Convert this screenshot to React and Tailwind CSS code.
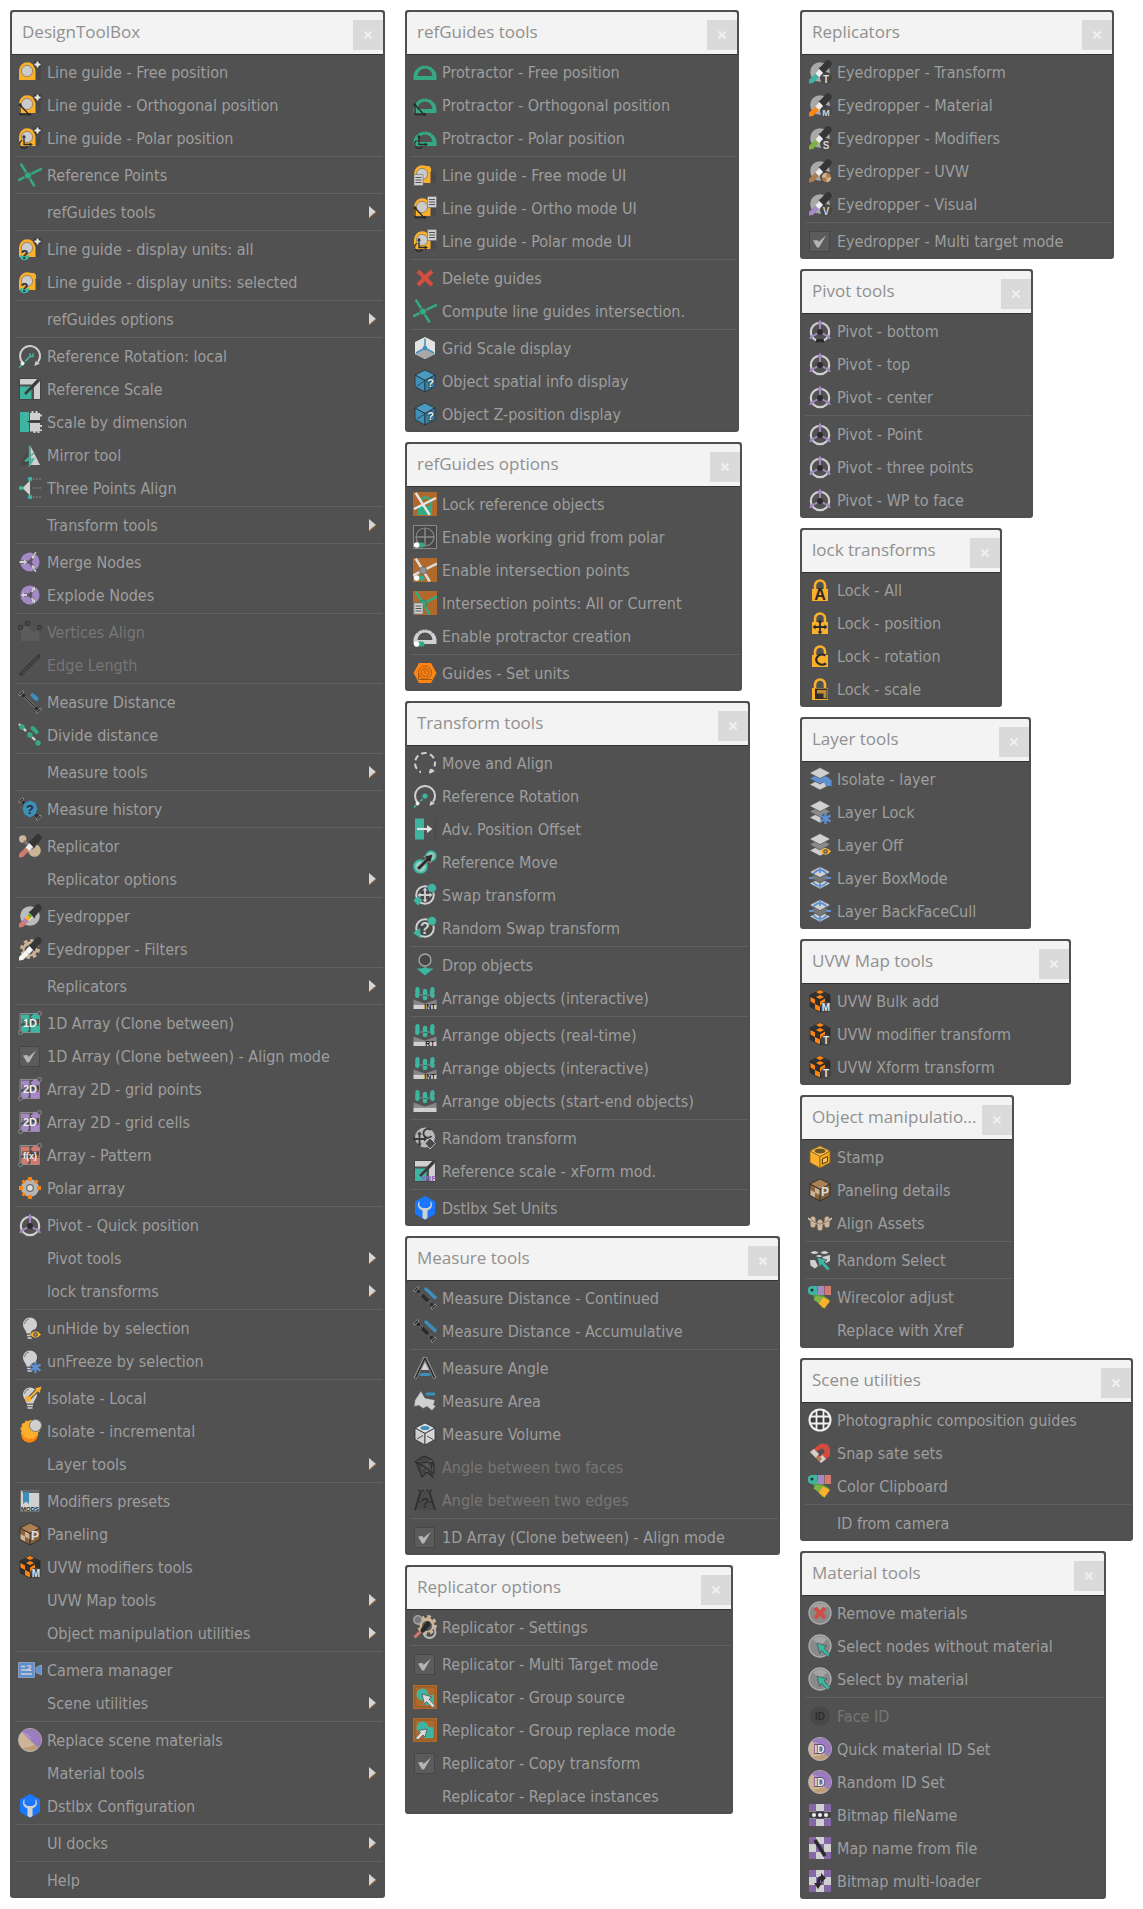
import React from "react";

const TEAL = "#3eb5a0";
const GREEN = "#35a983";
const YELLOW = "#fbb02d";
const ORANGE = "#ff8412";
const LIGHT = "#d0d0d0";
const GRAY = "#a9a9a9";
const DARK = "#2b2b2b";
const PURPLE = "#a489c4";
const BLUE = "#3c8fb8";
const SKY = "#5f91d2";
const BEIGE = "#cdb497";
const SALMON = "#d17a70";
const BROWN = "#a97d50";
const BASE = "#515151";

/* ---------- shared icon parts ---------- */

const Glyph = ({ x = 12, y = 17, size = 9, fill = LIGHT, outline = "none", children }) => (
  <text
    x={x}
    y={y}
    fontSize={size}
    fill={fill}
    stroke={outline}
    strokeWidth={outline === "none" ? 0 : 2}
    paintOrder="stroke"
    fontWeight="700"
    textAnchor="middle"
    fontFamily="Liberation Sans, sans-serif"
  >
    {children}
  </text>
);

const Tape = ({ bump }) => (
  <>
    <path d="M17 9h6v11h-6z" fill="#494949" />
    <path d="M1 20V10.500a8 8 0 0 1 16.500 0V20z" fill={YELLOW} />
    {bump && <path d="M12 3h4l2 2v4l-3 1z" fill={YELLOW} />}
    <circle cx="9" cy="11" r="5.600" fill="#cbcbcb" stroke="#8a7a55" strokeWidth="0.800" />
  </>
);

const Plus = () => (
  <>
    <circle cx="19.500" cy="4.500" r="4" fill="#3a3a3a" />
    <path d="M19.500 1.500v6M16.500 4.500h6" stroke="#ececec" strokeWidth="2" />
  </>
);

const Ortho = () => (
  <g stroke={DARK} strokeWidth="1.300" fill="none">
    <path d="M2 11v10.500h10M2 12l8.500 9" />
    <path d="M.5 12.500 2 10l1.500 2.500zM11 20l2.500 1.500L11 23z" fill={DARK} strokeWidth="0.500" />
  </g>
);

const Polar = () => (
  <g stroke={DARK} strokeWidth="1.300" fill="none">
    <path d="M6 10v8.500h7.500" />
    <path d="M2.500 15.500a4.300 4.300 0 1 0 7 5M2 16a5 5 0 0 1 2-1.500" />
    <path d="M4.500 11.500 6 9l1.500 2.500zM12 17l2.500 1.500L12 20z" fill={DARK} strokeWidth="0.500" />
  </g>
);

const HelpBadge = () => (
  <>
    <path d="M1.500 18.500h10a5 4.800 0 0 1-10 0z" fill={TEAL} />
    <Glyph x={6.5} y={22} size={13} fill={DARK}>?</Glyph>
  </>
);

const Sheet = ({ x, y }) => (
  <>
    <path d={`M${x} ${y}h9v11h-9z`} fill="#cfcfcf" stroke="#6b6b6b" strokeWidth="0.600" />
    <path d={`M${x + 1.5} ${y + 3}h6M${x + 1.5} ${y + 5.5}h6M${x + 1.5} ${y + 8}h6`} stroke="#555" />
  </>
);

const Cross = ({ color = GREEN, dot = color, ring = BASE }) => (
  <>
    <path d="M2.700.5 16.700 23.500M0 17.500 24 5.500" stroke={color} strokeWidth="2.500" />
    <circle cx="10" cy="12.500" r="3.600" fill={dot} stroke={ring} strokeWidth="0.800" />
  </>
);

const RotateRing = () => (
  <>
    <path d="M4.500 18.500A10 10 0 1 1 20 18" stroke={LIGHT} strokeWidth="2" fill="none" />
    <path d="m16.500 22 1-5 4.500 2.500z" fill={LIGHT} />
  </>
);

const ScaleShape = () => (
  <>
    <path d="M1.500 1.500h21v21h-21z" fill={BASE} stroke="#454545" />
    <path d="M2 2h17.500L14 7.500H2zM22 4v18h-6V10z" fill={LIGHT} />
    <path d="M2 9.500h11.500V22H2z" fill={TEAL} />
    <path d="m7 17 8-8 5.500-6" stroke="#3b3b3b" strokeWidth="2.600" />
  </>
);

const NodeBall = ({ out }) => (
  <>
    <circle cx="12" cy="12" r="9.600" fill={PURPLE} />
    <path d="M12 12 3 12M12 12l5-8.500M12 12l5 8.500" stroke="#5b5266" strokeWidth="2.800" />
    {out ? (
      <path d="m2.500 12 3.500-2.500v1.500h3v2H6v1.500zM17 3.500l.3 4.300-1.200-.7-1.600 2.700-1.700-1 1.600-2.700-1.300-.7zM17 20.500l.3-4.300-1.200.7-1.600-2.700-1.700 1 1.600 2.700-1.300.7z" fill={LIGHT} />
    ) : (
      <path d="M1.500 11h4.500V9.500L9.500 12 6 14.500V13H1.500zM18.500 2.500l-2.200 3.800 1.300.7-3.800 2.300-.1-4.400 1.300.7 2-3.600zM18.500 21.500l-2.200-3.800 1.300-.7-3.800-2.300-.1 4.400 1.300-.7 2 3.600z" fill={LIGHT} />
    )}
  </>
);

const Ruler = () => (
  <>
    <path d="m3.500 3.500 17 17M5.500 1 1 5.500M23 18.500 18.500 23" stroke="#a5a5a5" strokeWidth="2.400" />
    <path d="m4 4 16 16M5 1.500 1.500 5M22.500 19 19 22.500" stroke={DARK} strokeWidth="1.400" />
    <circle cx="5.500" cy="5.500" r="1.800" fill={DARK} />
    <circle cx="18.500" cy="18.500" r="1.800" fill={DARK} />
  </>
);

const Pipette = ({ tip = SALMON, glass = "#ededed" }) => (
  <>
    <path d="M1 23.500v-3.500l6.500-6.500 3.500 3.500-6 6z" fill={tip} />
    <path d="m7.500 13.500 4-4.500 4 3.500-4.500 4.500z" fill={glass} />
    <path d="m10.500 8 2-1 5.500-6a3.500 3.500 0 0 1 5 4.800l-5.500 6.200-1 2.500z" fill="#363636" />
  </>
);

const Gear = ({ fill = BEIGE, cx = 12, cy = 12, r = 7.5 }) => (
  <>
    <circle cx={cx} cy={cy} r={r} fill={fill} />
    <circle cx={cx} cy={cy} r={r + 1} fill="none" stroke={fill} strokeWidth="2.800" strokeDasharray="3.600 3.080" />
  </>
);

const EyeBadge = () => (
  <>
    <path d="M12 18.500q5.500-6.500 11 0-5.500 6.500-11 0z" fill={YELLOW} />
    <circle cx="17.500" cy="18.500" r="2.300" fill={BASE} />
    <circle cx="17.500" cy="18.500" r="1" fill={YELLOW} />
  </>
);

const FrostBadge = () => (
  <path d="M17.500 13v11M12.500 15.500l10 6M22.500 15.500l-10 6" stroke={SKY} strokeWidth="2.200" />
);

const Bulb = () => (
  <>
    <path d="M12 1.500a7 7 0 0 1 7 7c0 4-3 5-3.500 9h-7C8 13.500 5 12.500 5 8.500a7 7 0 0 1 7-7z" fill={LIGHT} />
    <path d="M6.500 8A5.500 5.500 0 0 1 11 3" stroke="#777" fill="none" />
    <path d="M9 19.500h6M9.500 22h5" stroke={LIGHT} strokeWidth="1.600" />
  </>
);

const ArrayBase = ({ color, children }) => (
  <>
    <path d="M2 2.500h17M2 2.500V20M4 21.500h17.500V5" stroke="#8d8d8d" fill="none" />
    <path d="M3 3.500h8.500v9H3zM12.500 12.500h8.500v9h-8.500z" fill={color} />
    <path d="M17 1.500 22.500 6 17 11l-4.500-5z" fill={color} />
    <circle cx="7" cy="17.500" r="4" fill={color} />
    <path d="M4 8h17v7H4z" fill="#3d3d3d" opacity="0.450" />
    <circle cx="21.500" cy="2.500" r="2" fill="none" stroke="#8d8d8d" />
    <circle cx="2.500" cy="21.500" r="2" fill="none" stroke="#8d8d8d" />
    {children}
  </>
);

const PivotBase = () => (
  <>
    <circle cx="12" cy="13" r="9.200" fill="none" stroke={LIGHT} strokeWidth="2.200" />
    <path d="M12 13V2M12 13l-9 5M12 13l9 5" stroke={PURPLE} strokeWidth="1.900" />
    <path d="m9.500 5 2.500-4.500L14.500 5zM1 20l2-4 2.500 3.500zM23 20l-2-4-2.500 3.500z" fill={PURPLE} />
    <circle cx="12" cy="13" r="3" fill={DARK} />
  </>
);

const Cube = ({ top, left, right, edge = DARK }) => (
  <g stroke={edge} strokeWidth="0.800" strokeLinejoin="round">
    <path d="m12 1 10 5-10 5.500L2 6z" fill={top} />
    <path d="m2 6 10 5.500V23L2 17.500z" fill={left} />
    <path d="m22 6-10 5.500V23l10-5.500z" fill={right} />
  </g>
);

const PanelCube = () => (
  <>
    <Cube top="#ab8053" left="#8c6540" right="#84603c" />
    <path d="m2.500 12 4.500 2.500v5L2.500 17zM7 9.500l4.500 2.500v5L7 14.500z" fill={BEIGE} />
    <Glyph x={17} y={17.5} size={12} fill="#dedede">P</Glyph>
  </>
);

const UvwCube = ({ letter }) => (
  <>
    <Cube top="#333" left="#303030" right="#2d2d2d" />
    <path d="m12 1 4 2-4 2-4-2zM12 6l4 2-4 2-4-2zM2.500 8l4.500 2.500V15l-4.500-2.500zM7 15l5 2.500v5L7 20zM12 12.500l5-3v4.500l-5 3z" fill={ORANGE} />
    <circle cx="18" cy="18" r="5.500" fill="#454545" />
    <Glyph x={18} y={22} size={10} fill="#e0e0e0">{letter}</Glyph>
  </>
);

const WrenchHex = () => (
  <>
    <path d="m12 0 10 5.500v12.500L12 24 2 18V5.500z" fill="#1a78ff" />
    <path d="M6.500 5c-3 3-1.500 8 3 9.500V22l2.500 1.500 2.500-1.500v-7.500c4.500-1.500 6-6.500 3-9.500v5l-3 2h-5l-3-2z" fill={LIGHT} />
  </>
);

const Protractor = ({ color = GREEN }) => (
  <>
    <path d="M.5 20v-3a11.500 11.500 0 0 1 23 0v3z" fill={color} />
    <path d="M4.500 16a7.500 7.500 0 0 1 15 0z" fill={BASE} />
    <path d="m4 8 1.500 1.500M8 5l.8 2M12 4.500V6.500M16 5l-.8 2M20 8l-1.500 1.500" stroke={BASE} strokeWidth="0.700" />
  </>
);

const Toggle = () => (
  <>
    <path d="M4 17.500h5a2.500 2.500 0 0 1 0 5H4z" fill={GREEN} />
    <circle cx="3.600" cy="20" r="2.700" fill="#fff" />
  </>
);

const ActiveTile = () => <path d="M0 0h24v24H0z" fill="#b0692b" />;

const SwapRing = () => (
  <>
    <circle cx="12" cy="12" r="8.800" fill="#474747" stroke={LIGHT} strokeWidth="2" />
    <circle cx="19" cy="5" r="4.500" fill={TEAL} stroke={BASE} strokeWidth="0.600" />
  </>
);

const MoveCross = ({ color = LIGHT, cx = 12, cy = 12 }) => (
  <g transform={`translate(${cx - 12} ${cy - 12})`}>
    <path d="M12 6.500v11M6.500 12h11" stroke={color} strokeWidth="1.800" />
    <path d="m9.500 7.500 2.500-3 2.500 3zM9.500 16.500l2.500 3 2.500-3zM7.500 9.500l-3 2.500 3 2.500zM16.500 9.500l3 2.500-3 2.500z" fill={color} />
  </g>
);

const Arrange = ({ label }) => (
  <>
    <path d="M2 5h3M19 5h3M2 9h20" stroke="#8a8a8a" />
    <path d="M4.500 3v4l-.3 3M19.500 3l-.5 4 .5 3" stroke={TEAL} strokeWidth="4.200" strokeLinecap="round" />
    <path d="M12 5v7" stroke={TEAL} strokeWidth="4.500" strokeLinecap="round" />
    <path d="M10 9.500h4" stroke="#3c6f66" />
    <path d="m.5 13.500 11.500 4 11.500-4V18H.5z" fill="#858585" />
    <path d="M.5 18.500h23V23H.5z" fill={LIGHT} />
    {label && <Glyph x={17} y={22.5} size={7} fill="#1d1d1d">{label}</Glyph>}
  </>
);

const Padlock = () => (
  <>
    <path d="M7 11V7.500a5 5 0 0 1 10 0V11" stroke={YELLOW} strokeWidth="2.600" fill="none" />
    <path d="M4 11h16v12H4z" fill={YELLOW} />
  </>
);

const Layers = ({ mid = "#8b8b8b" }) => (
  <>
    <path d="m12 12 10.500 5.500L12 23 1.500 17.500z" fill={LIGHT} stroke={BASE} strokeWidth="0.700" />
    <path d="m12 6 10.500 5.500L12 17 1.500 11.500z" fill={mid} stroke={BASE} strokeWidth="0.700" />
    <path d="m12 .5 10.500 5.500L12 11.500 1.500 6z" fill={LIGHT} stroke={BASE} strokeWidth="0.700" />
  </>
);

const Swatches = () => (
  <>
    <path d="m3 8 4-3 14.500 9.500-7 9z" fill="#5a9c3b" />
    <path d="m15 12 7 4-5.500 7.500-6-5z" fill={YELLOW} />
    <path d="M8 10.500 15 12l-4 6.500-5.500-4z" fill="#7fb344" />
    <path d="M4 1h5v9H4a4.500 4.500 0 0 1 0-9z" fill={TEAL} />
    <path d="M9.500 1h6.500v9H9.500z" fill={PURPLE} />
    <path d="M16.500 1H23v9h-6.500z" fill={SALMON} />
    <circle cx="4" cy="5" r="1.500" fill={DARK} />
  </>
);

const Pointer = ({ fill = TEAL }) => (
  <path d="m9 9 10 3-3 2 6 6.500-2.500 2.500-6-6.500-2 3z" fill={fill} stroke="#4a4a4a" strokeWidth="0.700" />
);

const Ball = () => (
  <>
    <circle cx="12" cy="12" r="11" fill="#898989" stroke="#ababab" strokeWidth="1.300" />
    <path d="M5 5.500a9.500 9.500 0 0 1 14 0L12 12z" fill="#a4a4a4" />
  </>
);

const TwoToneBall = () => (
  <>
    <circle cx="12" cy="12" r="11.500" fill={BEIGE} stroke="#b7b0a8" />
    <path d="M4 4a11.300 11.300 0 0 1 16 16z" fill="#9a7cbf" />
    <path d="M5 4.500A9 9 0 0 1 13.500 12z" fill="#b297d2" />
    <path d="M4.500 20a11.300 11.300 0 0 0 15 0l-3-3q-6 3-12 3z" fill="#bd9d78" />
  </>
);

const Bitmap = () => (
  <>
    <path d="M1 1h22v22H1z" fill={LIGHT} />
    <path d="M1 1h7v7H1zM16 1h7v7h-7zM8 8h8v8H8zM1 16h7v7H1zM16 16h7v7h-7z" fill="#8566a6" />
  </>
);

const DropperWith = ({ tip, children }) => (
  <>
    <circle cx="12" cy="12" r="9.800" fill={GRAY} />
    <circle cx="18" cy="18" r="6" fill="#474747" />
    <Pipette tip={tip} />
    {children}
  </>
);

/* ---------- icon set ---------- */

const icons = {
  tapeFree: <><Tape /><Plus /></>,
  tapeOrtho: <><Tape /><Plus /><Ortho /></>,
  tapePolar: <><Tape /><Plus /><Polar /></>,
  tapeAll: <><Tape /><Plus /><HelpBadge /></>,
  tapeSelected: <><Tape bump /><HelpBadge /></>,
  refPoint: <Cross />,
  rotateLocal: <><RotateRing /><path d="m1 23.500 11-11M12 12.500v-3M12 12.500h3V9.500" stroke={TEAL} strokeWidth="1.600" fill="none" strokeDasharray="8 1" /><circle cx="4.500" cy="19.500" r="1.900" fill="#eee" /></>,
  rotate: <><RotateRing /><path d="m1 23.500 11-11" stroke={TEAL} strokeWidth="1.800" strokeDasharray="3 1.500" /><circle cx="12" cy="12" r="2.600" fill={TEAL} /><circle cx="4.500" cy="19.500" r="1.900" fill="#eee" /></>,
  scale: <ScaleShape />,
  scaleDim: <><path d="M2 2h9v20H2z" fill={TEAL} /><path d="M12 3h1.500V1h2v2h2V1h2v2H22v1.500h2v2h-2V10H12zM12 13h10v2h2v2h-2v2.500h2v1.500h-2.500v2h-2v-1.500h-2V23h-2v-1.500H12z" fill={LIGHT} /><path d="M9.500 11.500H23" stroke="#3a3a3a" strokeWidth="1.300" /></>,
  mirror: <><path d="M11.500 3v19H2z" fill="#484848" /><path d="M12.500 3v19h9.500z" fill={LIGHT} /><path d="M11.500 2.500V22.500l4-6.500-8.500 2 9-8" stroke={TEAL} strokeWidth="1.500" fill="none" /></>,
  threePoints: <><path d="M4.500 12 12 4.500v15z" fill={LIGHT} /><path d="M15 3h8M15 12h8M15 21h8" stroke="#858585" strokeDasharray="2 1" /><g fill={TEAL}><circle cx="3" cy="12" r="2.200" /><circle cx="12" cy="3" r="2.200" /><circle cx="12" cy="21" r="2.200" /></g></>,
  merge: <NodeBall />,
  explode: <NodeBall out />,
  vertices: <><path d="M3 21V9l6.500-4.500L15 12l6.500-3v12z" fill="#5b5b5b" /><g fill={BASE} stroke="#393939" strokeWidth="1.400"><circle cx="2.500" cy="7.500" r="2" /><circle cx="9.500" cy="3.500" r="2" /><circle cx="21.500" cy="7.500" r="2" /></g></>,
  edge: <><path d="M3 21 21 3" stroke="#3a3a3a" strokeWidth="3.600" strokeLinecap="round" /><path d="M4 20 20 4" stroke="#606060" strokeWidth="1" strokeDasharray="1.500 1" /></>,
  measure: <><Ruler /><path d="m14.500 5 4 4" stroke={BLUE} strokeWidth="4" strokeLinecap="round" /></>,
  measureMore: <><Ruler /><path d="m9 9 6 6" stroke={DARK} strokeWidth="3.500" /><path d="m13 3 9 8.500" stroke={BLUE} strokeWidth="3.500" strokeLinecap="round" /></>,
  divide: <><path d="m1 1 22 22" stroke={LIGHT} strokeWidth="2.400" strokeDasharray="2 3.500 4.500 3" /><path d="m14.500 5 4 4" stroke={GREEN} strokeWidth="4" strokeLinecap="round" /><g fill={GREEN}><circle cx="4" cy="4" r="2.700" /><circle cx="12" cy="12" r="2.700" /><circle cx="20" cy="20" r="2.700" /></g></>,
  history: <><Ruler /><path d="m12 3.500 5.500 2.500 2 6-2.500 5.500-5 3-5.500-3-2-5.500 2-6z" fill={BLUE} /><Glyph x={12} y={17} size={13} fill={DARK}>?</Glyph></>,
  replicator: <><circle cx="4.700" cy="5" r="3.700" fill={BEIGE} /><circle cx="16.500" cy="16.500" r="6.300" fill={BEIGE} /><path d="m6 7 9 8" stroke="#7a7a7a" strokeWidth="3" /><Pipette /></>,
  dropper: <><circle cx="12" cy="12" r="9.800" fill="#bcbcbc" /><Pipette /><path d="m4.500 16.500 2.500-2.500 3 3-2.500 2.500z" fill={PURPLE} /><path d="m7 14 3-3 3 3-3 3z" fill={YELLOW} /><path d="m9.500 11 2-2 3 3-2 2z" fill="#6fae3b" /></>,
  dropperGear: <><Gear /><circle cx="11" cy="13" r="4.500" fill="#575757" /><Pipette tip="#f4f4f4" glass="#fff" /></>,
  dropT: <DropperWith tip={TEAL}><Glyph x={18} y={23} size={10} fill="#dedede">T</Glyph></DropperWith>,
  dropM: <DropperWith tip={ORANGE}><Glyph x={18} y={23} size={9}>M</Glyph></DropperWith>,
  dropS: <DropperWith tip="#7cb342"><Glyph x={18} y={23} size={10}>S</Glyph></DropperWith>,
  dropUvw: <DropperWith tip={BROWN}><circle cx="18.500" cy="18.500" r="4.800" fill={BROWN} /><path d="M18.500 18.500v-4.800a4.800 4.800 0 0 0-4.800 4.800zM18.500 18.500v4.800a4.800 4.800 0 0 0 4.800-4.800z" fill={BEIGE} /></DropperWith>,
  dropV: <DropperWith tip={PURPLE}><Glyph x={18} y={23} size={10}>V</Glyph></DropperWith>,
  arr1: <ArrayBase color={TEAL}><Glyph x={12} y={16} size={11} fill="#eee">1D</Glyph></ArrayBase>,
  arr2: <ArrayBase color={PURPLE}><Glyph x={12} y={16} size={11} fill="#eee">2D</Glyph></ArrayBase>,
  arrF: <ArrayBase color={SALMON}><Glyph x={12} y={15.5} size={9} fill="#eee">f(x)</Glyph></ArrayBase>,
  polarArray: <><circle cx="12" cy="12" r="9" fill="#b5b5b5" /><circle cx="12" cy="12" r="4" fill="#6f6f6f" /><circle cx="12" cy="12" r="2.700" fill="#e0e0e0" /><path d="M10 1h4v4h-4zM10 19h4v4h-4zM1 10h4v4H1zM19 10h4v4h-4zM3.500 5.500l2-2L8 6 6 8zM16 6l2.500-2.500 2 2L18 8zM3.500 18.500 6 16l2 2-2.500 2.500z" fill={ORANGE} /></>,
  pivot: <PivotBase />,
  pivotBottom: <><PivotBase /><path d="M8.500 20h7l1 3.500h-9z" fill={DARK} /></>,
  unhide: <><Bulb /><circle cx="18" cy="18.500" r="5.500" fill={BASE} /><EyeBadge /></>,
  unfreeze: <><Bulb /><circle cx="18" cy="18.500" r="5.500" fill={BASE} /><FrostBadge /></>,
  isoLocal: <><Bulb /><path d="m11 12.500 9-9" stroke="#5a5a5a" strokeWidth="4" /><path d="m11 12.500 9-9" stroke={YELLOW} strokeWidth="2" /><path d="m17 2.500 6.500-2-2 6.500z" fill={YELLOW} /><circle cx="10" cy="13" r="3" fill={YELLOW} /></>,
  isoInc: <><circle cx="11.500" cy="15.500" r="8.300" fill={ORANGE} /><circle cx="12" cy="10.500" r="8.800" fill={YELLOW} /><circle cx="12" cy="10.500" r="8.800" fill="none" stroke={YELLOW} strokeWidth="1.500" strokeDasharray="2.500 2" /><circle cx="17.500" cy="6.500" r="6" fill={LIGHT} stroke="#777" /></>,
  mods: <><path d="M2.500 1.500h19v21h-19z" fill={LIGHT} stroke="#555" strokeWidth="0.600" /><path d="M4.500 3H22" stroke="#444" strokeWidth="1.600" /><path d="M5 3h6v12l-3-2.500L5 15z" fill={BLUE} /><Glyph x={12} y={22} size={6} fill="#222">MODS</Glyph></>,
  panel: <PanelCube />,
  uvwM: <UvwCube letter="M" />,
  uvwT: <UvwCube letter="T" />,
  camera: <><path d="M.5 4.500h16v15H.5zM18 9.500l5.500-2.500v10L18 14.500z" fill={SKY} stroke="#8c9db5" /><path d="M3 8.500h4M3 12h10M3 16h11" stroke={LIGHT} strokeWidth="1.600" /><Glyph x={11} y={13} size={9}>2</Glyph></>,
  replaceMat: <TwoToneBall />,
  config: <WrenchHex />,
  protractor: <Protractor />,
  protractorOrtho: <><Protractor /><Ortho /></>,
  protractorPolar: <><Protractor /><Polar /></>,
  protractorToggle: <><Protractor color={LIGHT} /><Toggle /></>,
  tapeSheetFree: <><Tape bump /><Sheet x={1} y={11.5} /></>,
  tapeSheetOrtho: <><Tape /><Sheet x={14.5} y={0.5} /><Ortho /></>,
  tapeSheetPolar: <><Tape /><Sheet x={14.5} y={0.5} /><Polar /></>,
  remove: <path d="m6.500 3.500 5.500 5.500 5.500-5.500 3 3L15 12l5.500 5.500-3 3L12 15l-5.500 5.500-3-3L9 12 3.500 6.500z" fill="#d24f3f" />,
  gridScale: <><path d="m12 1 10 5v12l-10 5-10-5V6z" fill="#e2e2e2" /><path d="m2 18 10-5 10 5-10 5z" fill="#a8a8a8" /><path d="M12 2.500V12l-9 5M12 12l9 5" stroke={BLUE} strokeWidth="1.500" fill="none" /><circle cx="12" cy="12" r="2.200" fill={BLUE} /></>,
  spatial: <><Cube top="#4a9ac2" left="#3d90ba" right="#3583ab" /><path d="m4 17 7-4.500" stroke={DARK} strokeWidth="0.700" /><Glyph x={17.5} y={18} size={11} fill="#eee" outline="#2c5468">?</Glyph></>,
  lockRef: <><ActiveTile /><path d="M5 14h14v9H5z" fill={GREEN} /><path d="M8 8a5.500 5.500 0 0 1 10 4v3" stroke={GREEN} strokeWidth="2.400" fill="none" /><path d="M2.700 1 16.700 23M1 17 23 6" stroke="#e6e6e6" strokeWidth="2.400" /></>,
  gridPolar: <><path d="M.5.5h23v23H.5z" fill="#474747" stroke="#8a8a8a" /><path d="M12 3v18M3 12h18" stroke="#8a8a8a" strokeWidth="1.400" /><circle cx="12" cy="12" r="9" fill="none" stroke="#8a8a8a" strokeWidth="1.200" /><Toggle /></>,
  pointsOn: <><ActiveTile /><Cross color="#dcdcdc" dot="#929292" ring="#666" /><Toggle /></>,
  pointsSheet: <><ActiveTile /><Cross color={GREEN} ring="#2c7c60" /><Sheet x={1} y={12} /></>,
  guideUnits: <><path d="M6 2h12l5.500 10L18 22H6L.5 12z" fill={ORANGE} /><g fill="none" stroke="#a85a14"><circle cx="12" cy="11.500" r="6.500" /><circle cx="12" cy="11.500" r="4" /><path d="M5.500 12v6.500H19M10.500 10h3M10.500 12h3" /></g></>,
  moveAlign: <><circle cx="12" cy="12" r="10" stroke={LIGHT} strokeWidth="2" fill="none" strokeDasharray="5.500 3.500" strokeDashoffset="2" /><path d="M8 20h8v4H8z" fill={BASE} /><path d="m16.500 23 .5-5.500 5 2.500z" fill={LIGHT} /></>,
  offset: <><path d="M22.500 1v22" stroke="#484848" strokeWidth="1.500" /><path d="M2 1.500h9v21H2z" fill={TEAL} /><path d="M4 12h11" stroke="#e2e2e2" strokeWidth="2.200" /><path d="m14 8 5.500 4L14 16z" fill="#e2e2e2" /></>,
  refMove: <><g fill="none" stroke={TEAL} strokeWidth="2"><circle cx="7.500" cy="16.500" r="6.300" fill="#8ed2c6" /><circle cx="18" cy="6" r="4.700" fill="#8ed2c6" /></g><path d="m5 19 1 1.500L15.500 11l2 2L20 4 11 6.500l2 2L3.500 18z" fill={DARK} stroke="#bbb" strokeWidth="0.700" /></>,
  swap: <><SwapRing /><MoveCross /><path d="m5 13 4.500 4.500L5 22.500.5 17.500z" fill={TEAL} /></>,
  swapRandom: <><SwapRing /><Glyph x={12} y={18} size={16}>?</Glyph><path d="m7 12 1 10.500L0 17z" fill={TEAL} /></>,
  drop: <><circle cx="12" cy="7" r="6" fill="#474747" stroke={GRAY} strokeWidth="1.300" /><path d="M3.500 15.500h5l3.500-1.500 3.500 1.500h5L12 22.500z" fill={TEAL} /></>,
  arrInt: <Arrange label="INT" />,
  arrRt: <Arrange label="RT" />,
  arrPlain: <Arrange />,
  randomT: <><circle cx="12" cy="11.500" r="10" fill="#b7b7b7" /><MoveCross color="#3a3a3a" cx={6.5} cy={13} /><path d="M18 4a4.500 4.500 0 1 0 .5 6" stroke="#3a3a3a" strokeWidth="1.800" fill="none" /><path d="m17 12 5.500 5.500L17 23l-5-5.500z" fill="#4a4a4a" stroke="#cfcfcf" strokeWidth="0.800" /></>,
  scaleX: <><ScaleShape /><Glyph x={15.5} y={22} size={7.5} fill="#8e5fb8">XRF</Glyph></>,
  angle: <><path d="m12 1.500-10 21M12 1.500l10 21" stroke="#999" strokeWidth="3.200" /><path d="m12 2-9.500 20M12 2l9.500 20" stroke={DARK} strokeWidth="1.700" /><path d="m12 6 4 8H8z" fill={LIGHT} /><path d="M8 18.500h8" stroke={BLUE} strokeWidth="3" strokeLinecap="round" /></>,
  area: <><path d="m2 11 6-9 4 7 10 2-1.500 5 2.500 1-4 4.500-5-4-4 2-4-3-5 1z" fill={LIGHT} stroke={BASE} strokeWidth="0.500" /><path d="M14 5h7" stroke={BLUE} strokeWidth="2.800" strokeLinecap="round" /></>,
  volume: <><Cube top="#dedede" left="#cfcfcf" right="#d6d6d6" /><ellipse cx="12" cy="6" rx="4.500" ry="2" fill={BLUE} /><path d="m4 17 6-3.500M14 14l6 3.500" stroke={DARK} strokeWidth="0.800" /></>,
  faces: <g fill="#444" stroke="#2e2e2e" strokeWidth="1.200"><path d="m3 6 8-5 9 4-2 9 2 8-6-5-5 5-3-7z" /><path d="m3 6 11 2 6-3M14 8v9M9 14l5-6 7 13" fill="none" stroke="#5e5e5e" /><path d="m2 7 19 1v11l-9-7z" fill="none" /></g>,
  edges: <><path d="M3 22 8 3h8l5 19z" fill="#4a4a4a" /><path d="m2 22 6-19.500M22 22 16 2.500" stroke="#303030" strokeWidth="2" /><path d="M5 2.500h14" stroke="#303030" strokeWidth="1.500" strokeDasharray="2 2" /><path d="M5 14h4M15 14h4" stroke="#303030" /><Glyph x={12} y={20} size={14} fill="#303030">?</Glyph></>,
  replSettings: <><Gear cx={14} cy={10} r={7.5} /><circle cx="16.500" cy="17" r="6" fill="none" stroke="#bdbdbd" strokeWidth="1.800" /><circle cx="14" cy="11" r="5" fill="#555" /><path d="m10 15 5-6" stroke={DARK} strokeWidth="5" strokeLinecap="round" /><path d="m1.500 22.500 6-6" stroke={SALMON} strokeWidth="3" /><circle cx="4.800" cy="4.800" r="4" fill="#777" stroke="#a5a5a5" strokeWidth="1.500" /></>,
  groupSource: <><ActiveTile /><path d="M2 2h20v20H2z" fill="none" stroke="#8f5a2b" /><circle cx="9.500" cy="9.500" r="6" fill={TEAL} /><path d="M10 10h11v10H10z" fill={TEAL} /><Pointer fill="#d8d8d8" /></>,
  groupReplace: <><ActiveTile /><path d="M2 2h20v20H2z" fill="none" stroke="#8f5a2b" /><circle cx="9.500" cy="9.500" r="6" fill={TEAL} /><path d="M11 9h9.500v11H11z" fill={TEAL} /><path d="m14 11-2 8-2-2-5 5-2.500-2 5-5.500-2-2z" fill="#d8d8d8" stroke="#4a4a4a" strokeWidth="0.700" /></>,
  lockAll: <><Padlock /><Glyph x={12} y={22} size={16} fill={DARK}>A</Glyph></>,
  lockPos: <><Padlock /><MoveCross color={DARK} cy={16} /></>,
  lockRot: <><Padlock /><path d="M17.500 11.500a6 5 0 1 0 .5 8" stroke={DARK} strokeWidth="2.200" fill="none" /></>,
  lockScale: <><Padlock /><path d="M7 11.500h12.500V22H7z" fill="#2f2f2f" /><path d="M9 13h9.500v8h-3v-4.500H9z" fill="#c08b32" /></>,
  layerIsolate: <><Layers mid={SKY} /><path d="M15 12h4v-2l2 2 2.500 1v6h-6z" fill={SKY} /></>,
  layerLock: <><Layers /><circle cx="17.500" cy="18.500" r="5" fill={BASE} /><FrostBadge /></>,
  layerOff: <><Layers /><EyeBadge /></>,
  layerBox: <><Layers mid="#777" /><g stroke={SKY} strokeWidth="1.800" fill="none"><path d="M5 8q7-8 14 0M5 16q7 8 14 0M12 1v6M12 17v6M1 12h5M18 12h5" /></g></>,
  stamp: <><Cube top="#fbc04f" left={YELLOW} right="#f4a51e" edge="#8d6420" /><ellipse cx="12" cy="6" rx="5.500" ry="2.600" fill="#6a5428" /><path d="m14.500 14 5-2.500v5l-5 2.500z" fill="#f7c35f" stroke="#553e12" /></>,
  alignAssets: <><path d="M0 7q12 12 24 0" stroke={LIGHT} strokeWidth="1.300" fill="none" /><path d="M5 8v6M12 11v6M19 8v6" stroke={BEIGE} strokeWidth="5" strokeLinecap="round" /><path d="M3 9q9 8 18 0" stroke="#8a7a66" fill="none" /></>,
  randomSelect: <><path d="M2.500 4.500q4-3 8 0-4 3-8 0zM12.500 4.500q4-3 8 0-4 3-8 0zM2 12h5l3 6-3 2.500-4.500-3zM14 9l8-2v6l-4 2zM8 8q3-2 6 0-3 2.500-6 0z" fill={LIGHT} /><Pointer /></>,
  swatches: <Swatches />,
  compGuides: <><circle cx="12" cy="12" r="10.500" fill="#3e3e3e" stroke="#f2f2f2" strokeWidth="2" /><path d="M8.500 1.500v21M15.500 1.500v21M1.500 8.500h21M1.500 15.500h21" stroke="#f2f2f2" strokeWidth="1.800" /></>,
  snapSets: <><path d="M2 11 12 3q9-2 10 6v6l-9 7z" fill="#d64a3c" /><path d="m7 12 6-4.500q4 0 3.500 4L12 15z" fill={BASE} /><path d="m2 11 4-3 5 5-3 4zM13 22l-3.500-4 5-4 3.500 4z" fill={LIGHT} /><path d="m8 17 3-2 3 3-3 3z" fill={BROWN} /></>,
  matRemove: <><Ball /><path d="m7 7 10 10M17 7 7 17" stroke="#cf4f45" strokeWidth="4" /></>,
  matSelect: <><Ball /><Pointer /></>,
  faceId: <><circle cx="12" cy="12" r="10" fill="#484848" /><Glyph x={12} y={15.5} size={10} fill="#2e2e2e">ID</Glyph></>,
  quickId: <><TwoToneBall /><Glyph x={11.5} y={15.5} size={10} fill="#f0f0f0" outline="#5f5078">ID</Glyph></>,
  bmpName: <><Bitmap /><path d="M1 8.500h22v7H1z" fill={DARK} opacity="0.850" /><g fill="#eee"><circle cx="6" cy="12" r="2" /><circle cx="12" cy="12" r="2" /><circle cx="18" cy="12" r="2" /></g></>,
  bmpFile: <><Bitmap /><path d="m7 4 10 16" stroke={DARK} strokeWidth="3.500" /></>,
  bmpLoader: <><Bitmap /><path d="M9 14c0-5 2-7 4-7V4l5 5-5 5v-3c-1 0-1 1-1 3h2l-4 6-4-6z" fill={DARK} /></>,
};

/* ---------- menu data: "-" is a divider ---------- */

const sub = (label) => ({ label, sub: true });
const chk = (label) => ({ label, check: true });
const off = (label, icon) => ({ label, icon, off: true });
const it = (label, icon) => ({ label, icon });

const columns = [
  [
    {
      title: "DesignToolBox",
      width: "max-w-[375px]",
      items: [
        it("Line guide - Free position", "tapeFree"),
        it("Line guide - Orthogonal position", "tapeOrtho"),
        it("Line guide - Polar position", "tapePolar"),
        "-",
        it("Reference Points", "refPoint"),
        "-",
        sub("refGuides tools"),
        "-",
        it("Line guide - display units: all", "tapeAll"),
        it("Line guide - display units: selected", "tapeSelected"),
        "-",
        sub("refGuides options"),
        "-",
        it("Reference Rotation: local", "rotateLocal"),
        it("Reference Scale", "scale"),
        it("Scale by dimension", "scaleDim"),
        it("Mirror tool", "mirror"),
        it("Three Points Align", "threePoints"),
        "-",
        sub("Transform tools"),
        "-",
        it("Merge Nodes", "merge"),
        it("Explode Nodes", "explode"),
        "-",
        off("Vertices Align", "vertices"),
        off("Edge Length", "edge"),
        "-",
        it("Measure Distance", "measure"),
        it("Divide distance", "divide"),
        "-",
        sub("Measure tools"),
        "-",
        it("Measure history", "history"),
        "-",
        it("Replicator", "replicator"),
        sub("Replicator options"),
        "-",
        it("Eyedropper", "dropper"),
        it("Eyedropper - Filters", "dropperGear"),
        "-",
        sub("Replicators"),
        "-",
        it("1D Array (Clone between)", "arr1"),
        chk("1D Array (Clone between) - Align mode"),
        it("Array 2D - grid points", "arr2"),
        it("Array 2D - grid cells", "arr2"),
        it("Array - Pattern", "arrF"),
        it("Polar array", "polarArray"),
        "-",
        it("Pivot - Quick position", "pivot"),
        sub("Pivot tools"),
        sub("lock transforms"),
        "-",
        it("unHide by selection", "unhide"),
        it("unFreeze by selection", "unfreeze"),
        "-",
        it("Isolate - Local", "isoLocal"),
        it("Isolate - incremental", "isoInc"),
        sub("Layer tools"),
        "-",
        it("Modifiers presets", "mods"),
        it("Paneling", "panel"),
        it("UVW modifiers tools", "uvwM"),
        sub("UVW Map tools"),
        sub("Object manipulation utilities"),
        "-",
        it("Camera manager", "camera"),
        sub("Scene utilities"),
        "-",
        it("Replace scene materials", "replaceMat"),
        sub("Material tools"),
        it("Dstlbx Configuration", "config"),
        "-",
        sub("UI docks"),
        "-",
        sub("Help"),
      ],
    },
  ],
  [
    {
      title: "refGuides tools",
      width: "max-w-[334px]",
      items: [
        it("Protractor - Free position", "protractor"),
        it("Protractor - Orthogonal position", "protractorOrtho"),
        it("Protractor - Polar position", "protractorPolar"),
        "-",
        it("Line guide - Free mode UI", "tapeSheetFree"),
        it("Line guide - Ortho mode UI", "tapeSheetOrtho"),
        it("Line guide - Polar mode UI", "tapeSheetPolar"),
        "-",
        it("Delete guides", "remove"),
        it("Compute line guides intersection.", "refPoint"),
        "-",
        it("Grid Scale display", "gridScale"),
        it("Object spatial info display", "spatial"),
        it("Object Z-position display", "spatial"),
      ],
    },
    {
      title: "refGuides options",
      width: "max-w-[337px]",
      items: [
        it("Lock reference objects", "lockRef"),
        it("Enable working grid from polar", "gridPolar"),
        it("Enable intersection points", "pointsOn"),
        it("Intersection points: All or Current", "pointsSheet"),
        it("Enable protractor creation", "protractorToggle"),
        "-",
        it("Guides - Set units", "guideUnits"),
      ],
    },
    {
      title: "Transform tools",
      width: "max-w-[345px]",
      items: [
        it("Move and Align", "moveAlign"),
        it("Reference Rotation", "rotate"),
        it("Adv. Position Offset", "offset"),
        it("Reference Move", "refMove"),
        it("Swap transform", "swap"),
        it("Random Swap transform", "swapRandom"),
        "-",
        it("Drop objects", "drop"),
        it("Arrange objects (interactive)", "arrInt"),
        "-",
        it("Arrange objects (real-time)", "arrRt"),
        it("Arrange objects (interactive)", "arrInt"),
        it("Arrange objects (start-end objects)", "arrPlain"),
        "-",
        it("Random transform", "randomT"),
        it("Reference scale - xForm mod.", "scaleX"),
        "-",
        it("Dstlbx Set Units", "config"),
      ],
    },
    {
      title: "Measure tools",
      width: "max-w-[375px]",
      items: [
        it("Measure Distance - Continued", "measureMore"),
        it("Measure Distance - Accumulative", "measureMore"),
        "-",
        it("Measure Angle", "angle"),
        it("Measure Area", "area"),
        it("Measure Volume", "volume"),
        off("Angle between two faces", "faces"),
        off("Angle between two edges", "edges"),
        "-",
        chk("1D Array (Clone between) - Align mode"),
      ],
    },
    {
      title: "Replicator options",
      width: "max-w-[328px]",
      items: [
        it("Replicator - Settings", "replSettings"),
        "-",
        chk("Replicator - Multi Target mode"),
        it("Replicator - Group source", "groupSource"),
        it("Replicator - Group replace mode", "groupReplace"),
        chk("Replicator - Copy transform"),
        it("Replicator - Replace instances"),
      ],
    },
  ],
  [
    {
      title: "Replicators",
      width: "max-w-[314px]",
      items: [
        it("Eyedropper - Transform", "dropT"),
        it("Eyedropper - Material", "dropM"),
        it("Eyedropper - Modifiers", "dropS"),
        it("Eyedropper - UVW", "dropUvw"),
        it("Eyedropper - Visual", "dropV"),
        "-",
        chk("Eyedropper - Multi target mode"),
      ],
    },
    {
      title: "Pivot tools",
      width: "max-w-[233px]",
      items: [
        it("Pivot - bottom", "pivotBottom"),
        it("Pivot - top", "pivot"),
        it("Pivot - center", "pivot"),
        "-",
        it("Pivot - Point", "pivot"),
        it("Pivot - three points", "pivot"),
        it("Pivot - WP to face", "pivot"),
      ],
    },
    {
      title: "lock transforms",
      width: "max-w-[202px]",
      items: [
        it("Lock - All", "lockAll"),
        it("Lock - position", "lockPos"),
        it("Lock - rotation", "lockRot"),
        it("Lock - scale", "lockScale"),
      ],
    },
    {
      title: "Layer tools",
      width: "max-w-[231px]",
      items: [
        it("Isolate - layer", "layerIsolate"),
        it("Layer Lock", "layerLock"),
        it("Layer Off", "layerOff"),
        it("Layer BoxMode", "layerBox"),
        it("Layer BackFaceCull", "layerBox"),
      ],
    },
    {
      title: "UVW Map tools",
      width: "max-w-[271px]",
      items: [
        it("UVW Bulk add", "uvwM"),
        it("UVW modifier transform", "uvwT"),
        it("UVW Xform transform", "uvwT"),
      ],
    },
    {
      title: "Object manipulatio...",
      width: "max-w-[214px]",
      items: [
        it("Stamp", "stamp"),
        it("Paneling details", "panel"),
        it("Align Assets", "alignAssets"),
        "-",
        it("Random Select", "randomSelect"),
        "-",
        it("Wirecolor adjust", "swatches"),
        it("Replace with Xref"),
      ],
    },
    {
      title: "Scene utilities",
      width: "max-w-[333px]",
      items: [
        it("Photographic composition guides", "compGuides"),
        it("Snap sate sets", "snapSets"),
        it("Color Clipboard", "swatches"),
        "-",
        it("ID from camera"),
      ],
    },
    {
      title: "Material tools",
      width: "max-w-[306px]",
      items: [
        it("Remove materials", "matRemove"),
        it("Select nodes without material", "matSelect"),
        it("Select by material", "matSelect"),
        "-",
        off("Face ID", "faceId"),
        it("Quick material ID Set", "quickId"),
        it("Random ID Set", "quickId"),
        it("Bitmap fileName", "bmpName"),
        it("Map name from file", "bmpFile"),
        it("Bitmap multi-loader", "bmpLoader"),
      ],
    },
  ],
];

const ROW = "flex h-[33px] w-full items-center gap-[5px] pt-px pr-[7px] pl-1.5 text-left whitespace-nowrap";

function MenuItem({ item }) {
  if (item === "-") {
    return (
      <li role="separator" className="ml-[3px] flex h-1 items-center">
        <span className="h-px w-full bg-[#616161]" />
      </li>
    );
  }
  if (item.check) {
    return (
      <li>
        <label className={ROW}>
          <span className="grid size-6 items-center pl-px">
            <input
              type="checkbox"
              defaultChecked
              className="peer size-[21px] appearance-none border border-[#464646] bg-[#5b5b5b] [grid-area:1/1]"
            />
            <svg viewBox="0 0 21 21" className="pointer-events-none invisible size-[21px] peer-checked:visible [grid-area:1/1]" aria-hidden="true">
              <path d="M4 9.500l4.500-.5 1 2L17 4.500 10 16.500H8z" fill="#b5b5b5" />
            </svg>
          </span>
          <span className="pt-0.5">{item.label}</span>
        </label>
      </li>
    );
  }
  return (
    <li>
      <button type="button" disabled={item.off} className={`${ROW} disabled:text-[#767676]`}>
        <svg viewBox="0 0 24 24" className="size-6 shrink-0" fill="none" aria-hidden="true">
          {item.icon ? icons[item.icon] : null}
        </svg>
        <span className="grow pt-0.5">{item.label}</span>
        {item.sub && (
          <svg viewBox="0 0 7 12" className="h-3 w-[7px] shrink-0" aria-hidden="true">
            <path d="M0 0v12l7-6z" fill="#d6d6d6" />
            <path d="M.5 11.500 6.500 6.200" stroke="#c0702c" />
          </svg>
        )}
      </button>
    </li>
  );
}

function Panel({ title, width, items }) {
  return (
    <section className={`w-full ${width} rounded-[3px] border-2 border-[#4f4f4f] bg-[#515151]`}>
      <header className="flex h-[43px] items-center justify-between rounded-t-[2px] border-b border-[#333333] bg-[#f3f3f3] pl-2.5">
        <h2 className="pb-0.5 whitespace-nowrap font-['Open_Sans',sans-serif] text-[17px] leading-6 text-[#909090]">{title}</h2>
        <button type="button" aria-label={`Close ${title}`} className="mt-1 grid size-[30px] place-items-center bg-[#dadada]">
          <svg viewBox="0 0 10 8" className="h-2 w-2.5" aria-hidden="true">
            <path d="M1.500 0.500 8.500 7.500M8.500 0.500 1.500 7.500" stroke="#f0f0f0" strokeWidth="2" />
          </svg>
        </button>
      </header>
      <ul>
        {items.map((item, i) => (
          <MenuItem key={i} item={item} />
        ))}
      </ul>
    </section>
  );
}

export default function App() {
  return (
    <main className="grid grid-cols-[375fr_375fr_333fr] items-start gap-5 bg-white p-2.5 font-['DejaVu_Sans_Condensed','DejaVu_Sans',sans-serif] text-[16px] text-[#9e9e9e]">
      {columns.map((panels, i) => (
        <div key={i} className="flex min-w-0 flex-col gap-2.5">
          {panels.map((panel) => (
            <Panel key={panel.title} {...panel} />
          ))}
        </div>
      ))}
    </main>
  );
}
